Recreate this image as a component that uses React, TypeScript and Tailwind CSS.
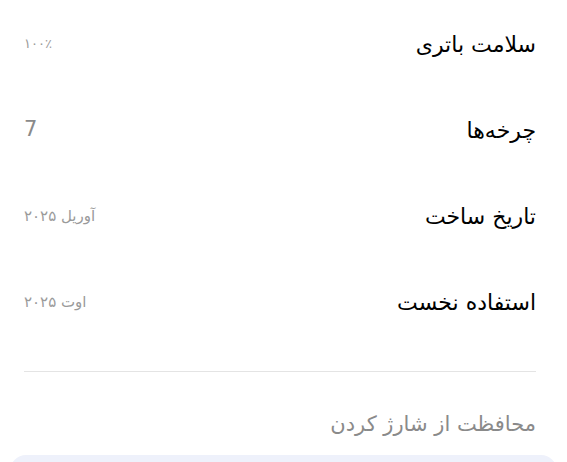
import React from 'react';

const rows = [
  { label: 'سلامت باتری', value: '۱۰۰٪', cls: 'text-[13px] text-[#9a9a9a]' },
  { label: 'چرخه‌ها', value: '7', cls: 'text-[21px] text-[#8a8a8a]' },
  { label: 'تاریخ ساخت', value: 'آوریل ۲۰۲۵', cls: 'text-[15px] text-[#9a9a9a]' },
  { label: 'استفاده نخست', value: 'اوت ۲۰۲۵', cls: 'text-[15px] text-[#9a9a9a]' },
];

export default function App() {
  return (
    <div
      dir="rtl"
      className="w-[567px] h-[462px] overflow-hidden bg-white"
      style={{ fontFamily: '"DejaVu Sans", "Noto Sans", sans-serif' }}
    >
      <div className="pr-[31px] pl-6 pt-[1px]">
        {rows.map((r) => (
          <div key={r.label} className="flex h-[86px] items-center justify-between">
            <span className="text-[22px] text-black">{r.label}</span>
            <span className={r.cls}>{r.value}</span>
          </div>
        ))}
        <div className="mt-[26px] h-px bg-[#e4e4e4]" />
        <div className="pt-[40px] pb-[19px] text-[21px] leading-6 text-[#8a8a8a]">
          محافظت از شارژ کردن
        </div>
      </div>
      <div className="mx-[10px] h-10 rounded-2xl bg-[#eef1fb]" />
    </div>
  );
}
